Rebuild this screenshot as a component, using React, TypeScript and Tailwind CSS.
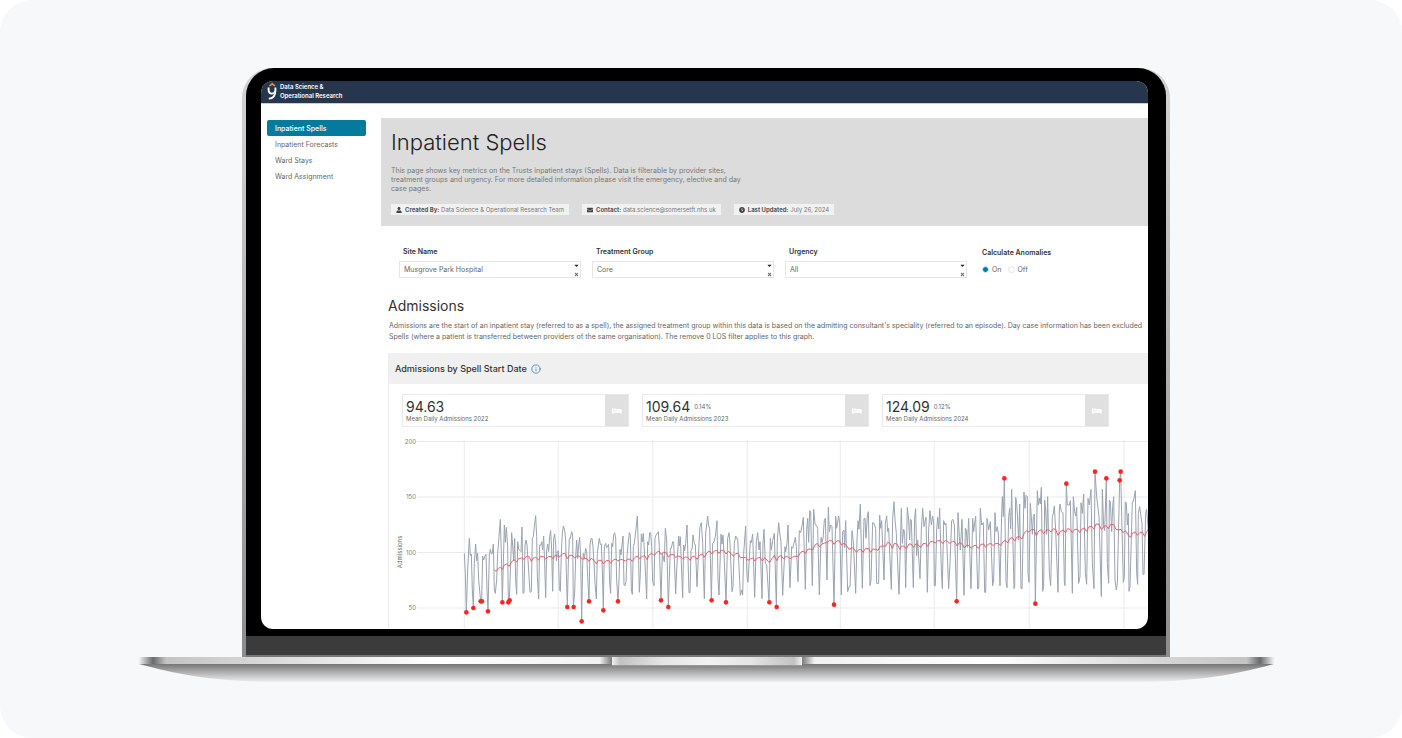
import { Info } from "lucide-react";
import type { ReactNode } from "react";
import { FaBed, FaCaretDown, FaClock, FaEnvelope, FaTimes, FaUser } from "react-icons/fa";

const pages = ["Inpatient Spells", "Inpatient Forecasts", "Ward Stays", "Ward Assignment"];

const filters = [
  { id: "site", label: "Site Name", options: ["Musgrove Park Hospital", "Yeovil District Hospital"] },
  { id: "group", label: "Treatment Group", options: ["Core", "All"] },
  { id: "urgency", label: "Urgency", options: ["All", "Emergency", "Elective"] },
];

const stats = [
  { value: "94.63", change: "", label: "Mean Daily Admissions 2022" },
  { value: "109.64", change: "0.14%", label: "Mean Daily Admissions 2023" },
  { value: "124.09", change: "0.12%", label: "Mean Daily Admissions 2024" },
];

// each block of readings is stored in thirds of a pixel from its own origin
type Block = { x: number; y: number; points: string };

const daily: Block[] = [
  {
    x: 0,
    y: 0,
    points:
      "223,370 226,430 229,547 233,420 238,325 241,377 244,372 247,480 250,534 253,400 257,342 260,392 263,370 266,450 272,514 275,514 278,378 281,390 284,380 288,373 291,480 294,544 298,375 301,358 304,372 307,370 310,342 313,480 316,490 320,450 323,370 327,320 331,268 334,370 337,517 340,400 343,285 346,337 349,292 353,350 355,517 358,511 362,400 365,308 368,345 371,392 374,325 377,450 380,493 383,335 386,358 390,362 393,365 396,291 399,490 402,488 405,345 408,330 411,345 414,390 417,440 420,487 424,485 427,325 430,320 433,290 437,257 440,320 442,440 446,507 449,345 453,345 455,335 458,360 461,318 464,400 467,503 470,360 473,342 476,365 479,320 482,302 485,360 488,484 491,325 494,312 497,345 499,392 502,365 505,362 508,478 511,484 514,370 517,310 520,288 524,300 527,330 529,430 532,530 535,400 538,325 541,325 545,305 548,315 550,530 554,490 557,380 560,330 563,386 566,345 569,322 572,380 575,574 578,400 580,370 583,386 587,355 590,365 593,440 597,514 600,345 603,326 606,325 609,350 612,400 615,460 619,507 622,370 625,345 628,325 631,343 634,342 637,420 640,541 643,350 647,340 650,353 656,343 659,460 662,490 665,340 668,350 671,315 674,308 677,325 680,450 684,514 687,450 690,358 693,375 696,345 699,318 702,465 705,467 708,455 711,380 714,345 718,308 721,315 724,480 727,493 730,350 733,340 736,315 742,258 745,350 748,487 751,430 754,312 757,336 760,310 763,360 767,440 770,507 773,335 776,345 779,308 782,308 785,350 788,455 792,467 795,325 798,315 801,312",
  },
  {
    x: 780,
    y: 150,
    points:
      "25,155 28,200 33,361 37,220 43,246 46,145 50,180 55,381 61,205 64,205 68,185 71,186 77,342 80,270 86,168 88,198 91,170 98,353 101,195 104,212 107,190 111,135 117,338 120,338 123,210 126,208 129,165 133,190 136,195 141,320 147,190 150,140 154,128 158,190 163,356 167,160 173,108 176,138 179,145 184,361 188,190 192,186 196,170 201,122 204,300 207,345 213,162 216,192 219,165 222,220 228,367 233,175 237,158 240,190 246,335 249,320 253,190 257,168 260,176 263,176 271,346 275,330 278,345 281,220 287,138 291,290 294,307 301,182 304,188 308,162 314,352 319,185 323,158 327,210 330,185 336,356 339,190 342,148 346,250 350,255 357,367 361,175 364,210 368,182 373,160 379,381 382,180 386,128 390,165 393,185 398,346 405,200 407,216 411,190 414,135 420,323 425,200 428,205 433,186 436,172 439,200 444,305 448,152 452,158 456,138 460,112 466,328 470,150 473,115 476,187 479,92 482,95 487,317 491,88 495,132 500,138 503,145 508,345 513,172 516,188 519,175 523,120 526,115 531,300 535,82 538,155 542,135 546,140 552,374 557,108 560,145 566,108 569,130 574,345 578,155 582,150 584,203 587,122 593,335 597,320 600,320 606,152 610,185 617,340 621,180 624,122 627,148 631,72 637,325 642,115 645,115 648,175 652,108 655,95 660,317 663,300 668,128 672,130 677,145 680,310 686,310 689,105 692,145 695,122 702,300 706,130 710,108 713,155 716,145 724,328 728,115 732,65 735,120 739,160 747,343 751,200 754,85 757,190 761,148 764,155 767,323 772,82 776,120",
  },
  {
    x: 1530,
    y: 0,
    points:
      "29,330 31,268 34,270 40,473 44,260 47,236 50,377 53,330 60,446 64,300 68,235 72,290 78,262 82,487 86,300 90,242 94,285 98,258 101,280 103,467 106,467 110,300 113,262 116,297 119,235 124,420 127,476 131,272 135,285 138,280 146,476 150,400 155,272 159,268 163,285 170,514 174,248 178,320 181,360 186,268 192,496 196,295 199,300 202,352 206,265 213,476 218,265 221,305 224,280 227,258 233,476 236,476 241,235 245,285 250,278 254,487 257,487 261,265 266,300 271,275 278,467 281,450 285,248 288,305 292,290 295,310 300,467 305,250 307,200 310,260 313,145 318,455 321,473 326,260 329,235 332,297 335,178 342,476 344,470 347,202 350,220 353,270 356,330 359,222 363,476 366,476 372,186 375,235 378,196 382,200 384,430 387,457 391,220 394,260 397,313 400,260 403,252 406,521 412,182 415,225 418,205 421,222 424,172 428,484 431,470 434,210 437,240 440,313 443,200 448,430 452,467 457,260 460,250 463,228 467,300 474,487 478,240 480,222 484,245 489,248 493,455 495,467 499,162 502,225 508,225 511,212 517,490 520,200 524,245 527,258 530,232 536,460 540,440 543,218 547,250 551,192 556,430 560,463 564,205 568,225 573,178 577,400 582,476 585,125 590,200 597,260 604,500 607,178 611,290 614,302 619,145 622,400 626,460 628,210 631,215 635,305 638,230 641,200 645,450 649,480 652,460 659,151 662,125 666,300 670,457 673,440 676,216 679,218 682,285 685,250 687,484 690,470 697,215 700,215 706,182 710,430 713,463 715,250 719,230 723,260 726,280 729,432 732,434 737,250 740,238 744,290 750,420",
  },
];

const average: Block[] = [
  {
    x: 0,
    y: 0,
    points:
      "313,420 319,424 325,415 331,412 337,418 343,405 350,402 357,409 365,395 373,390 380,396 386,386 395,384 402,388 412,377 418,382 424,394 430,384 437,382 446,390 452,379 461,380 467,387 475,380 484,379 489,386 496,375 502,378 510,380 518,371 526,371 532,386 539,376 547,376 554,384 562,377 570,379 577,388 585,385 592,387 597,394 604,385 612,391 619,402 626,391 634,391 640,402 647,393 656,391 662,400 670,390 678,387 684,393 692,388 700,390 706,393 713,388 720,387 727,394 734,383 742,378 749,386 757,379 764,377 771,389 778,374 786,370 793,377 800,367 807,363",
  },
  {
    x: 780,
    y: 150,
    points:
      "33,223 40,217 48,217 55,231 62,224 70,223 77,233 84,228 92,230 98,237 106,231 113,232 120,241 127,230 134,229 141,238 149,225 157,222 163,232 171,218 178,213 185,222 193,213 200,211 207,220 214,211 221,211 228,222 235,214 243,220 250,229 257,221 264,220 271,233 280,233 287,232 294,241 301,237 308,234 315,243 322,234 330,233 337,243 344,233 351,240 358,248 366,236 373,226 380,242 387,229 394,227 401,237 409,228 416,233 423,236 430,229 445,229 452,217 460,213 466,221 473,208 481,207 488,210 495,195 502,190 509,201 516,192 524,189 531,188 538,182 546,182 552,193 560,183 568,182 574,195 582,190 590,197 597,208 606,203 612,206 619,217 627,208 634,210 639,217 647,205 656,206 662,217 669,207 677,208 684,211 691,199 700,198 706,199 713,187 720,190 727,205 733,190 742,193 749,208",
  },
  {
    x: 1530,
    y: 0,
    points:
      "4,349 12,348 19,357 27,342 33,342 41,352 48,341 55,345 62,353 69,341 76,340 83,349 91,335 98,334 106,339 113,332 121,332 128,341 135,332 142,334 149,340 157,334 164,335 171,348 178,338 186,342 193,354 200,345 207,347 214,355 221,347 228,346 235,355 243,343 251,342 257,352 265,342 273,341 280,347 287,340 295,341 302,347 309,335 316,331 323,339 330,325 337,323 344,333 351,321 358,320 366,327 373,308 380,302 387,306 394,299 402,299 409,317 416,303 424,299 431,311 438,301 446,299 453,306 461,296 468,300 474,316 481,305 490,300 496,308 503,296 510,298 517,308 524,298 533,298 539,308 546,297 553,294 560,304 567,290 575,289 582,297 588,282 597,283 604,299 611,290 618,287 625,296 632,283 641,284 648,298 656,300 663,298 669,308 676,302 684,313 691,322 698,309 706,306 712,316 719,308 727,307 734,319 740,305 746,297",
  },
];

const anomalies: Block[] = [
  {
    x: 0,
    y: 0,
    points:
      "229,547 250,534 272,514 276,514 294,544 337,517 355,517 359,511 532,531 551,531 575,574 597,514 640,541 684,514",
  },
  { x: 780, y: 150, points: "33,361 55,381 185,361 228,367 358,367 380,381 552,374" },
  { x: 1530, y: 0, points: "170,514 406,521 313,145 499,161 585,125 619,145 659,151 662,125" },
];

const toPoints = (blocks: Block[]) =>
  blocks.flatMap((block) =>
    block.points.split(" ").map((pair) => {
      const [x, y] = pair.split(",").map(Number);
      return [(x + block.x) / 3, (y + block.y) / 3];
    })
  );

const yTicks = [
  { label: "200", y: 11.5 },
  { label: "150", y: 67 },
  { label: "100", y: 122.5 },
  { label: "50", y: 178 },
];

const xTicks = [74.3, 168.3, 262.8, 357.3, 450.3, 544.3, 639.3, 734];

function AdmissionsChart() {
  return (
    <svg className="block w-full h-[199px]" role="img" aria-label="Daily admissions">
      {xTicks.map((x) => (
        <line key={x} x1={x} x2={x} y1="10" y2="199" stroke="#ebebeb" />
      ))}
      {yTicks.map(({ label, y }) => (
        <g key={label}>
          <line x1="27" x2="100%" y1={y} y2={y} stroke="#ebebeb" />
          <text x="26" y={y + 2} textAnchor="end" fontSize="6" fill="#7d7d7d">
            {label}
          </text>
        </g>
      ))}
      <text transform="translate(12 122) rotate(-90)" textAnchor="middle" fontSize="6" fill="#666">
        Admissions
      </text>
      <polyline points={toPoints(daily).join(" ")} fill="none" stroke="#9aa3af" strokeLinejoin="round" />
      <polyline points={toPoints(average).join(" ")} fill="none" stroke="#e0626c" strokeLinejoin="round" />
      {toPoints(anomalies).map(([x, y]) => (
        <circle key={`${x}-${y}`} cx={x} cy={y} r="2.3" fill="#ff2424" />
      ))}
    </svg>
  );
}

function Logo() {
  return (
    <svg viewBox="0 0 10 18" className="w-[10px] h-[18px]" fill="none" aria-hidden="true">
      <path d="M2.4 4 5.2 1.8 8 4" stroke="#e39a3b" strokeWidth="1.5" />
      <path d="M1.6 5.4v2c0 2.8 1.4 4.2 3.4 4.2 1.4 0 2.6-.8 3.2-2.2" stroke="#fff" strokeWidth="1.9" />
      <path d="M8.4 5.4v3c0 4.6-2 8-6.6 8.2" stroke="#fff" strokeWidth="1.9" />
    </svg>
  );
}

function Badge({ icon, label, children }: { icon: ReactNode; label: string; children: ReactNode }) {
  return (
    <li className="flex items-center gap-[3px] h-[11px] px-[5px] bg-[#f1f1f1] text-[6px] text-[#777] whitespace-nowrap">
      <span className="text-[#444]">{icon}</span>
      <span>
        <b className="font-bold text-[#555]">{label}:</b> {children}
      </span>
    </li>
  );
}

function Dashboard() {
  return (
    <div className="rounded-xl overflow-hidden bg-white">
      <header className="flex items-center gap-[3px] h-[23px] pb-[2px] pl-[6px] bg-[#26364d] border-b border-[#c9ced6]">
        <Logo />
        <p className="text-[6px] leading-[9px] font-semibold text-white">
          Data Science &amp;
          <br />
          Operational Research
        </p>
      </header>
      <div className="flex">
        <nav className="shrink-0 w-[99px] ml-[6px] mr-[15px] mt-4">
          {pages.map((page, i) => (
            <a
              key={page}
              href="#"
              className={`flex items-center h-4 pt-[2px] pl-2 text-[7px] rounded-[2px] ${
                i === 0 ? "bg-[#037a9e] text-white font-medium" : "text-[#666]"
              }`}
            >
              {page}
            </a>
          ))}
        </nav>
        <main className="flex-1 min-w-0 mt-[14px]">
          <section className="bg-[#dcdcdc] pl-[10px] pt-[10px] pb-[11px]">
            <h1 className="text-[22px] leading-[28px] font-light text-[#222]">Inpatient Spells</h1>
            <p className="mt-[10px] max-w-[360px] text-[7px] leading-[9px] text-[#777]">
              This page shows key metrics on the Trusts inpatient stays (Spells). Data is filterable by provider sites,
              treatment groups and urgency. For more detailed information please visit the emergency, elective and day
              case pages.
            </p>
            <ul className="flex gap-[13px] mt-[11px]">
              <Badge icon={<FaUser size={6} />} label="Created By">
                Data Science &amp; Operational Research Team
              </Badge>
              <Badge icon={<FaEnvelope size={6} />} label="Contact">
                data.science@somersetft.nhs.uk
              </Badge>
              <Badge icon={<FaClock size={6} />} label="Last Updated">
                July 26, 2024
              </Badge>
            </ul>
          </section>

          <form className="flex gap-[11px] pl-[18px] pt-[21px]">
            {filters.map(({ id, label, options }) => (
              <div key={id} className="w-[182px]">
                <label htmlFor={id} className="block pl-1 text-[7px] leading-[9px] font-semibold text-[#333]">
                  {label}
                </label>
                <div className="flex mt-[5px] h-[17px] border border-[#e6e6e6]">
                  <select id={id} className="flex-1 appearance-none pt-px pl-1 text-[7px] text-[#666]">
                    {options.map((option) => (
                      <option key={option}>{option}</option>
                    ))}
                  </select>
                  <div className="flex flex-col items-center justify-between w-2">
                    <FaCaretDown size={7} className="text-[#222]" />
                    <button type="button" aria-label={`Clear ${label}`} className="text-[#666]">
                      <FaTimes size={5} />
                    </button>
                  </div>
                </div>
              </div>
            ))}
            <fieldset className="pl-1 mt-px text-[7px]">
              <legend className="leading-[9px] font-semibold text-[#333] whitespace-nowrap">Calculate Anomalies</legend>
              <div className="flex gap-[6px] mt-2 leading-[9px] text-[#666]">
                <label className="flex items-center gap-[3px]">
                  <input
                    type="radio"
                    name="anomalies"
                    defaultChecked
                    className="appearance-none w-[7px] h-[7px] rounded-full border border-[#e4e4e4] checked:border-[#dff0f6] checked:bg-[#037a9e]"
                  />
                  On
                </label>
                <label className="flex items-center gap-[3px]">
                  <input
                    type="radio"
                    name="anomalies"
                    className="appearance-none w-[7px] h-[7px] rounded-full border border-[#e4e4e4] checked:border-[#dff0f6] checked:bg-[#037a9e]"
                  />
                  Off
                </label>
              </div>
            </fieldset>
          </form>

          <section className="pl-[7px] pt-[19px]">
            <h2 className="text-[14px] leading-[18px] text-[#333]">Admissions</h2>
            <p className="mt-[5px] pl-px text-[7px] leading-[11px] text-[#666] whitespace-nowrap">
              Admissions are the start of an inpatient stay (referred to as a spell), the assigned treatment group
              within this data is based on the admitting consultant's speciality (referred to an episode). Day case
              information has been excluded
              <br />
              Spells (where a patient is transferred between providers of the same organisation). The remove 0 LOS
              filter applies to this graph.
            </p>
            <div className="mt-[11px] border-l border-[#ededed]">
              <div className="flex items-center gap-1 h-[31px] pl-[6px] bg-[#f0f0f0]">
                <h3 className="text-[9px] font-medium text-[#333]">Admissions by Spell Start Date</h3>
                <Info size={10} className="text-[#3c87b5]" />
              </div>
              <div className="flex gap-[13px] pl-[13px] pt-[10px]">
                {stats.map(({ value, change, label }) => (
                  <div key={label} className="flex shrink-0 w-[227px] h-[33px] border border-[#e9e9e9]">
                    <div className="flex-1 pl-[3px] pt-[4px]">
                      <p className="flex items-center gap-1 text-[14px] leading-[16px] text-[#333]">
                        {value}
                        <span className="text-[6px] text-[#666]">{change}</span>
                      </p>
                      <p className="text-[6px] leading-[8px] text-[#666]">{label}</p>
                    </div>
                    <div className="flex items-center justify-center w-[23px] bg-[#e0e0e0] text-white">
                      <FaBed size={10} />
                    </div>
                  </div>
                ))}
              </div>
              <div className="pl-px pt-[3px]">
                <AdmissionsChart />
              </div>
            </div>
          </section>
        </main>
      </div>
    </div>
  );
}

function Base() {
  return (
    <div className="relative">
      <div className="h-[7px] bg-[linear-gradient(90deg,#f4f4f4_0px,#6a6a6a_14px,#c4c4c4_27px,#d4d4d4_104px,#ffffff_26%,#eeeeee_44%,#eeeeee_56%,#ffffff_75%,#d4d4d4_calc(100%-104px),#c4c4c4_calc(100%-27px),#6a6a6a_calc(100%-14px),#f4f4f4_100%)]"></div>
      <svg viewBox="0 0 1135 18" preserveAspectRatio="none" className="block w-full h-[18px]" aria-hidden="true">
        <defs>
          <linearGradient id="underside" x1="0" x2="0" y1="0" y2="1">
            <stop offset="0" stopColor="#767676" />
            <stop offset="0.5" stopColor="#b4b4b4" />
            <stop offset="1" stopColor="#eeeeee" />
          </linearGradient>
        </defs>
        <path d="M0 0C40 11 75 17 130 18H1005C1060 17 1095 11 1135 0Z" fill="url(#underside)" />
      </svg>
      {/* opening notch, sits over the front edge */}
      <div className="absolute inset-x-0 top-0 flex justify-center">
        <div className="w-3 h-[7px] bg-linear-to-r from-[#eeeeee] to-[#7c7c7c]"></div>
        <div className="w-[190px] h-[9px] border-b border-[#999] bg-[linear-gradient(90deg,#f0f0f0_0px,#c2c2c2_8px,#e4e4e4_50px,#f2f2f2_50%,#e4e4e4_140px,#c2c2c2_182px,#f0f0f0_190px)]"></div>
        <div className="w-3 h-[7px] bg-linear-to-r from-[#7c7c7c] to-[#eeeeee]"></div>
      </div>
    </div>
  );
}

export default function App() {
  return (
    <div className="bg-white font-['Inter',sans-serif]">
      <div className="min-h-screen rounded-[32px] bg-[#f7f8fa] pt-[68px] pb-14 pl-[139px] pr-[128px]">
        <div className="ml-[103px] mr-[104px] px-1 rounded-t-[30px] bg-linear-to-b from-[#d4d4d4] to-[#8c8c8c]">
          <div className="bg-black rounded-t-[28px] pt-[13px] pb-[7px] pl-[15px] pr-[18px]">
            <Dashboard />
          </div>
          <div className="h-[21px] bg-[#3b3b3b] border-b-2 border-[#777]"></div>
        </div>
        <Base />
      </div>
    </div>
  );
}
